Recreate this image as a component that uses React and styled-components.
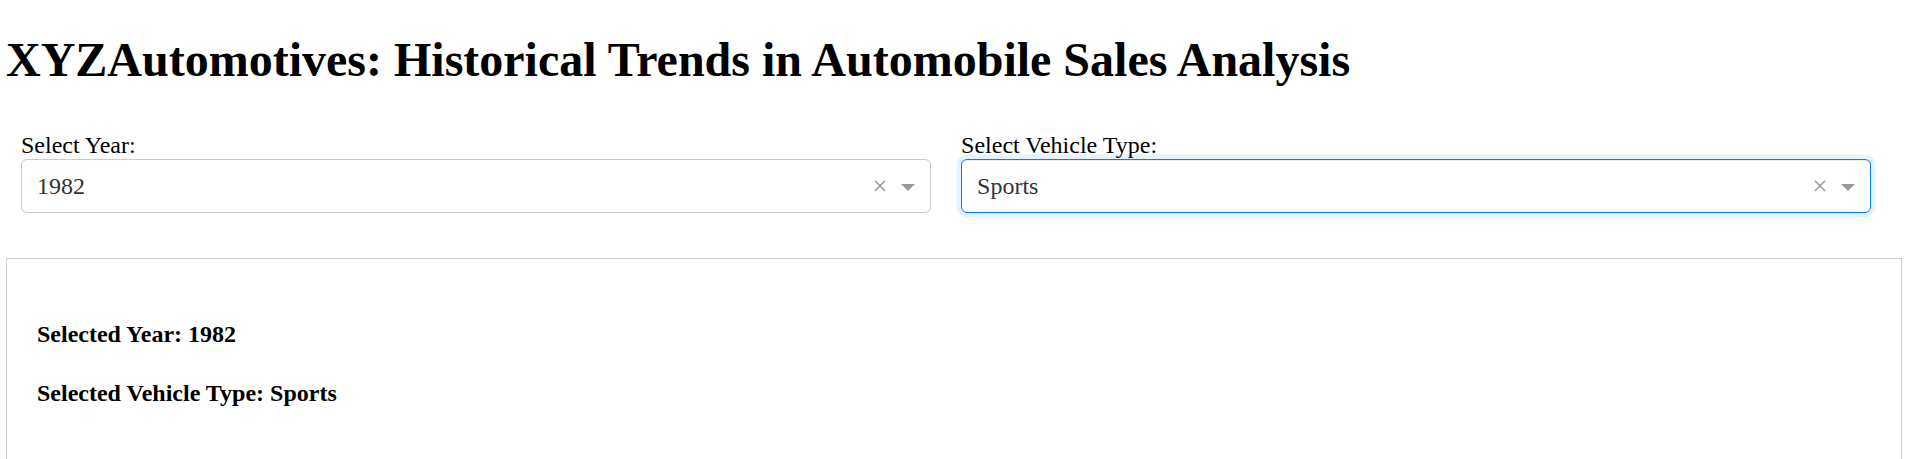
import React from "react";
import styled, { createGlobalStyle } from "styled-components";

const GlobalStyle = createGlobalStyle`
  html, body {
    margin: 0;
    padding: 0;
    background: #ffffff;
  }
  body {
    font-family: "Liberation Serif", "Times New Roman", serif;
    font-size: 24px;
    color: #000000;
  }
  * { box-sizing: border-box; }
`;

const Page = styled.div`
  padding: 0 10px 0 6px;
`;

const Title = styled.h1`
  margin: 32px 0 29px;
  font-size: 48px;
  font-weight: bold;
  line-height: normal;
`;

const ControlsRow = styled.div`
  display: flex;
  align-items: flex-start;
`;

const Field = styled.div`
  width: 48%;
  margin: 15px;
`;

const Label = styled.label`
  display: block;
  font-size: 24px;
  line-height: 28px;
`;

const Control = styled.div`
  display: flex;
  align-items: center;
  height: 54px;
  background: #ffffff;
  border: 1px solid ${(p) => (p.$focused ? "#007eff" : "#cccccc")};
  border-radius: 6px;
  box-shadow: ${(p) =>
    p.$focused
      ? "inset 0 1px 1px rgba(0,0,0,0.075), 0 0 0 4.5px rgba(0,126,255,0.1)"
      : "none"};
`;

const Value = styled.div`
  flex: 1;
  padding-left: 15px;
  line-height: 51px;
  font-size: 24px;
  color: #333333;
  white-space: nowrap;
  overflow: hidden;
`;

const ClearZone = styled.span`
  display: flex;
  align-items: center;
  justify-content: center;
  width: 25.5px;
  height: 100%;
  font-size: 27px;
  line-height: 1;
  color: #999999;
  cursor: pointer;
`;

const ArrowZone = styled.span`
  display: flex;
  align-items: center;
  justify-content: center;
  width: 37.5px;
  height: 100%;
  padding-right: 7.5px;
`;

const Arrow = styled.span`
  display: block;
  width: 0;
  height: 0;
  margin-top: 6px;
  border-style: solid;
  border-color: #999999 transparent transparent;
  border-width: 7.5px 7.5px 3.75px;
`;

const ResultPanel = styled.div`
  margin-top: 30px;
  border: 1px solid #cccccc;
  padding: 30px;
  min-height: 260px;
`;

const ResultLine = styled.p`
  margin: 32px 0;
  font-size: 24px;
  font-weight: bold;
`;

function Dropdown({ label, value, focused }) {
  return (
    <Field>
      <Label>{label}</Label>
      <Control $focused={focused}>
        <Value>{value}</Value>
        <ClearZone title="Clear value">×</ClearZone>
        <ArrowZone>
          <Arrow />
        </ArrowZone>
      </Control>
    </Field>
  );
}

export default function App() {
  return (
    <Page>
      <GlobalStyle />
      <Title>XYZAutomotives: Historical Trends in Automobile Sales Analysis</Title>
      <ControlsRow>
        <Dropdown label="Select Year:" value="1982" />
        <Dropdown label="Select Vehicle Type:" value="Sports" focused />
      </ControlsRow>
      <ResultPanel>
        <ResultLine>Selected Year: 1982</ResultLine>
        <ResultLine>Selected Vehicle Type: Sports</ResultLine>
      </ResultPanel>
    </Page>
  );
}
